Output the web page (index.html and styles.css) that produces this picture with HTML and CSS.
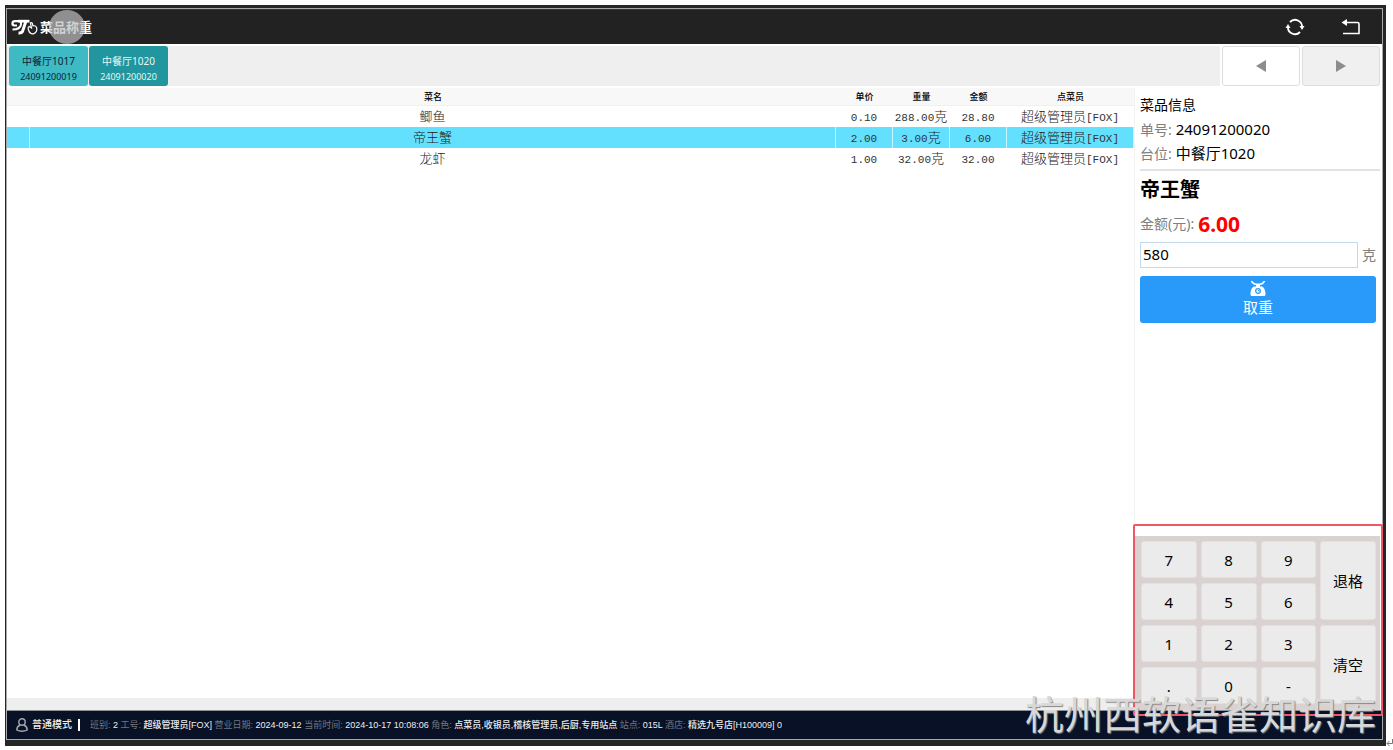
FILE: index.html
```html
<!DOCTYPE html>
<html lang="zh-CN">
<head>
<meta charset="utf-8">
<title>菜品称重</title>
<link rel="stylesheet" href="styles.css">
</head>
<body>
<div class="frame">
  <div class="window">
    <header class="topbar">
      <svg class="logo" width="27" height="16" viewBox="0 0 27 16" fill="none" stroke="#fff">
        <path d="M9 2.200H4C.8 2.200.6 6.200 3.500 6.500H6" stroke-width="2.200"/>
        <path d="M10 2V5.500C9.500 9 6.500 10.500 1.500 10.500" stroke-width="2"/>
        <path d="M7 2.200H18.500" stroke-width="2.800"/>
        <path d="M15 2 11.500 12.500Q10.500 14.300 7.500 14" stroke-width="3"/>
        <path d="M19.500 4.500 20.500 9 18 7.500C16.500 8 17 9.500 17.500 11 18.500 14 20.500 15.200 22.500 14.800 25.500 14 26.300 11 25.500 8.500 25 7 23.500 6.500 22 7L21.300 4.300C20.800 3.300 19.300 3.500 19.500 4.500z" stroke-width="1.200"/>
      </svg>
      <h1 class="title">菜品称重</h1>
      <span class="touch"></span>
      <nav class="actions">
        <button class="icon-button" type="button" aria-label="刷新">
          <svg width="20" height="18" viewBox="0 0 20 18" fill="none" stroke="#fff" stroke-width="1.800">
            <path d="M5 4A7 7 0 0 1 17 9.500"/><path d="M15 14A7 7 0 0 1 3 8.500"/>
            <path d="M.5 10 3 6 5.500 10zM14.500 8h5L17 12z" fill="#fff" stroke="none"/>
          </svg>
        </button>
        <button class="icon-button" type="button" aria-label="返回">
          <svg width="20" height="18" viewBox="0 0 20 18" fill="none" stroke="#fff" stroke-width="1.600">
            <path d="M5 4.500H16.500Q18 4.500 18 6V15.500H2"/><path d="M.5 4.500 6 1V8z" fill="#fff" stroke="none"/>
          </svg>
        </button>
      </nav>
    </header>

    <div class="strip">
      <div class="tabs">
        <button class="tab" type="button"><span class="tab-name">中餐厅1017</span><span>24091200019</span></button>
        <button class="tab active" type="button"><span class="tab-name">中餐厅1020</span><span>24091200020</span></button>
      </div>
      <button class="pager" type="button" aria-label="上一页"><svg width="10" height="12"><path d="M10 0V12L0 6z" fill="#8c8c8c"/></svg></button>
      <button class="pager next" type="button" aria-label="下一页"><svg width="10" height="12"><path d="M0 0V12L10 6z" fill="#8c8c8c"/></svg></button>
    </div>

    <main class="main">
      <section class="list">
        <table class="dishes">
          <colgroup><col class="c-mark"><col><col class="c-num"><col class="c-num"><col class="c-num"><col class="c-staff"></colgroup>
          <thead><tr><th></th><th>菜名</th><th>单价</th><th>重量</th><th>金额</th><th>点菜员</th></tr></thead>
          <tbody>
            <tr><td></td><td>鲫鱼</td><td><span class="mono">0.10</span></td><td><span class="mono">288.00</span>克</td><td><span class="mono">28.80</span></td><td>超级管理员<span class="mono">[FOX]</span></td></tr>
            <tr class="selected"><td></td><td>帝王蟹</td><td><span class="mono">2.00</span></td><td><span class="mono">3.00</span>克</td><td><span class="mono">6.00</span></td><td>超级管理员<span class="mono">[FOX]</span></td></tr>
            <tr><td></td><td>龙虾</td><td><span class="mono">1.00</span></td><td><span class="mono">32.00</span>克</td><td><span class="mono">32.00</span></td><td>超级管理员<span class="mono">[FOX]</span></td></tr>
          </tbody>
        </table>
      </section>

      <aside class="side">
        <section class="info">
          <h2 class="info-title">菜品信息</h2>
          <p class="line"><span class="label">单号:</span> 24091200020</p>
          <p class="line"><span class="label">台位:</span> 中餐厅1020</p>
        </section>
        <section class="weigh">
          <h3 class="dish">帝王蟹</h3>
          <p class="amount"><span class="label">金额(元):</span><strong>6.00</strong></p>
          <div class="field"><input class="weight" id="weight" type="text" value="580"><label class="label" for="weight">克</label></div>
          <button class="take" type="button">
            <svg width="16" height="15" viewBox="0 0 16 15">
              <path d="M1.500 0Q3 3.200 6 3.200H10Q13 3.200 14.500 0" fill="none" stroke="#fff" stroke-width="1.600"/>
              <path d="M6 3H10V5.500H12C14.500 6.500 15.500 10 15.500 13.500Q15.500 15 14 15H2Q.5 15 .5 13.500C.5 10 1.500 6.500 4 5.500H6z" fill="#fff"/>
              <circle cx="8" cy="10" r="2.300" fill="none" stroke="#2a9afa" stroke-width="1.300"/><path d="M8 10 9 9" stroke="#2a9afa"/>
            </svg>
            <span>取重</span>
          </button>
        </section>
        <div class="keypad">
          <button type="button">7</button><button type="button">8</button><button type="button">9</button><button class="tall" type="button">退格</button>
          <button type="button">4</button><button type="button">5</button><button type="button">6</button>
          <button type="button">1</button><button type="button">2</button><button type="button">3</button><button class="tall" type="button">清空</button>
          <button type="button">.</button><button type="button">0</button><button type="button">-</button>
        </div>
        <span class="highlight"></span>
      </aside>
    </main>

    <footer class="status">
      <svg width="12" height="14" viewBox="0 0 12 14" fill="none" stroke="#a5a8b0" stroke-width="1.400"><circle cx="6" cy="4" r="3.200"/><path d="M4 7C1 8.500.8 10 .8 12Q3 13.200 6 13.200T11.200 12C11.200 10 11 8.500 8 7"/></svg>
      <span class="mode">普通模式</span>
      <p class="facts"><span>班别:</span> 2 <span>工号:</span> 超级管理员[FOX] <span>营业日期:</span> 2024-09-12 <span>当前时间:</span> 2024-10-17 10:08:06 <span>角色:</span> 点菜员,收银员,稽核管理员,后厨,专用站点 <span>站点:</span> 015L <span>酒店:</span> 精选九号店[H100009] 0</p>
    </footer>
  </div>
</div>
<span class="watermark">杭州西软语雀知识库</span>
<svg class="return-mark" width="7" height="8" fill="none" stroke="#777"><path d="M6.500 0V4.500H1M3.500 2 1 4.500 3.500 7"/></svg>
</body>
</html>
```
FILE: styles.css
```css
* { box-sizing: border-box; }
body {
  margin: 0;
  min-height: 100vh;
  padding: 5px 7px 4px 5px;
  display: flex;
  position: relative;
  background: #fff;
  color: #000;
  font: 14px/20px "Noto Sans", "Noto Sans CJK SC", sans-serif;
}
h1, h2, h3, p { margin: 0; }
button { font: inherit; color: inherit; padding: 0; border: 0; }

.frame { flex: 1; display: flex; min-width: 0; padding: 3px 3px 6px 1px; background: #262626; }
.window { flex: 1; display: flex; flex-direction: column; min-width: 0; border: 1px solid #a8a8a8; background: #fff; }

.topbar { position: relative; display: flex; align-items: center; height: 35px; padding: 0 21px 0 4px; background: #222; border-top: 1px solid #333; }
.title { margin-left: 2px; font-size: 13px; line-height: 20px; font-weight: 700; color: #fff; }
.touch { position: absolute; left: 42px; top: 0; width: 36px; height: 34px; border-radius: 50%; background: rgba(190, 190, 190, .7); }
.actions { display: flex; gap: 36px; margin-left: auto; }
.icon-button { display: flex; background: none; }

.strip { display: flex; gap: 2px; height: 44px; padding: 2px 2px 2px 0; }
.tabs { flex: 1; display: flex; gap: 1px; padding-left: 2px; background: #efefef; }
.tab { width: 79px; display: flex; flex-direction: column; align-items: center; justify-content: flex-end; padding-bottom: 2px; border-radius: 3px; background: #3dbac4; color: #123; font-size: 9px; line-height: 15px; }
.tab-name { font-size: 10px; }
.tab.active { background: #21969f; color: #e4f6f7; }
.pager { width: 78px; display: flex; align-items: center; justify-content: center; border: 1px solid #ddd; border-radius: 3px; background: #fff; }
.pager.next { background: #f0f0f0; }

.main { flex: 1; display: grid; grid-template-columns: minmax(0, 1fr) 248px; }
.list { border-bottom: 12px solid #eee; }
.dishes { width: 100%; table-layout: fixed; border-collapse: separate; border-spacing: 0; text-align: center; }
.c-mark { width: 23px; }
.c-num { width: 57px; }
.c-staff { width: 127px; }
.dishes th { height: 18px; padding: 0; background: #f8f8f8; border-bottom: 1px solid #f0f0f0; font-size: 9px; line-height: 17px; font-weight: 500; }
.dishes td { height: 21px; padding: 0; font-size: 13px; line-height: 21px; font-weight: 300; color: #222; border-right: 1px solid transparent; white-space: nowrap; }
.dishes .selected td { background: #64e0ff; border-right-color: #c8f4ff; }
.mono { font-family: "Liberation Mono", monospace; font-size: 11px; line-height: 12px; font-weight: 400; color: #333; }

.side { position: relative; display: flex; flex-direction: column; border-left: 1px solid #f2f2f2; }
.info { margin: 5px 2px 0 5px; padding-bottom: 4px; border-bottom: 2px solid #e2e2e2; }
.info-title { font-size: 14px; line-height: 24px; font-weight: 400; }
.label { color: #808080; font-size: 14px; line-height: 16px; font-weight: 400; }
.line { font-size: 15px; line-height: 24px; }
.weigh { padding: 4px 6px 0 5px; }
.dish { font-size: 20px; line-height: 30px; font-weight: 700; }
.amount { display: flex; align-items: center; gap: 4px; height: 37px; }
.amount strong { color: #f00; font-size: 21px; }
.field { display: flex; align-items: center; gap: 4px; }
.weight { flex: 1; min-width: 0; height: 26px; padding: 0 2px 2px; border: 1px solid #c5d9ee; font: inherit; font-size: 15px; }
.take { width: 100%; height: 47px; margin-top: 8px; display: flex; flex-direction: column; align-items: center; justify-content: center; border-radius: 3px; background: #2a9afa; color: #fff; font-size: 15px; line-height: 22px; font-weight: 400; }
.keypad { margin: auto 2px 0 0; padding: 5px 4px 6px 6px; display: grid; grid-template-columns: repeat(4, 1fr); grid-template-rows: repeat(4, 37px); gap: 5px 4px; background: #d9d2d1; }
.keypad button { border-radius: 3px; background: #ebebeb; border: 1px solid #e4e0df; font-size: 15px; }
.keypad .tall { grid-row: span 2; }
.highlight { position: absolute; left: -2px; right: -1px; bottom: -6px; height: 192px; border: 2px solid #f25563; border-radius: 2px; pointer-events: none; }

.status { display: flex; align-items: center; height: 29px; padding-left: 9px; border-top: 1px solid #8d9198; background: #081126; color: #eee; font: 9px/14px "Liberation Sans", "Noto Sans CJK SC", sans-serif; }
.mode { margin: 0 10px 0 4px; padding-right: 6px; border-right: 2px solid #fff; font-size: 10px; line-height: 12px; font-weight: 500; }
.facts { overflow: hidden; font-weight: 500; white-space: nowrap; }
.facts span { color: #74777f; font-weight: 400; }

.watermark { position: absolute; right: 17px; bottom: 13px; font-size: 39px; line-height: 46px; font-weight: 400; color: #d8d8d8; text-shadow: 1px 1px 1px #888; white-space: nowrap; pointer-events: none; }
.return-mark { position: absolute; right: 0; bottom: 3px; }
```
